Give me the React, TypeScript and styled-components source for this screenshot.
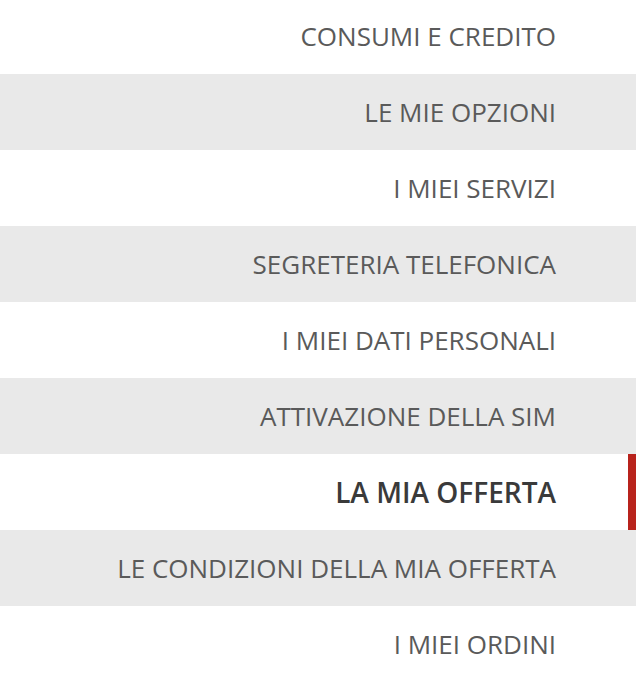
import React from "react";
import styled, { createGlobalStyle } from "styled-components";

const GlobalStyle = createGlobalStyle`
  html, body {
    margin: 0;
    padding: 0;
    background: #ffffff;
  }
  body {
    font-family: "Open Sans", "Noto Sans", sans-serif;
    overflow: hidden;
  }
`;

const Menu = styled.nav`
  display: flex;
  flex-direction: column;
  width: 636px;
  margin-top: -2px;
`;

const Item = styled.a<{ $shaded: boolean; $active: boolean }>`
  position: relative;
  display: flex;
  align-items: center;
  justify-content: flex-end;
  height: 76px;
  padding-right: 80px;
  box-sizing: border-box;
  background: ${(p) => (p.$shaded ? "#e9e9e9" : "#ffffff")};
  color: ${(p) => (p.$active ? "#3a3a3a" : "#5a5a5a")};
  font-size: ${(p) => (p.$active ? "28px" : "26px")};
  font-weight: ${(p) => (p.$active ? 600 : 400)};
  text-transform: uppercase;
  text-decoration: none;
  white-space: nowrap;

  &::after {
    content: "";
    display: ${(p) => (p.$active ? "block" : "none")};
    position: absolute;
    top: 0;
    right: 0;
    bottom: 0;
    width: 8px;
    background: #b8231c;
  }
`;

const items = [
  "Consumi e credito",
  "Le mie opzioni",
  "I miei servizi",
  "Segreteria telefonica",
  "I miei dati personali",
  "Attivazione della SIM",
  "La mia offerta",
  "Le condizioni della mia offerta",
  "I miei ordini",
];

const activeIndex = 6;

export default function App() {
  return (
    <>
      <GlobalStyle />
      <Menu>
        {items.map((label, i) => (
          <Item
            key={label}
            href="#"
            $shaded={i % 2 === 1}
            $active={i === activeIndex}
          >
            {label}
          </Item>
        ))}
      </Menu>
    </>
  );
}
